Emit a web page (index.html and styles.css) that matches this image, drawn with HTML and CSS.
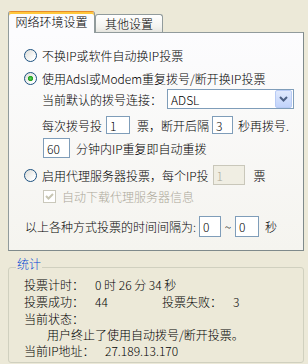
FILE: index.html
```html
<!DOCTYPE html>
<html lang="zh-CN">
<head>
    <meta charset="UTF-8">
    <title>投票设置</title>
    <link rel="stylesheet" href="styles.css">
</head>
<body>
<div class="window">
    <div class="tabs">
        <div class="tab active">网络环境设置</div>
        <div class="tab">其他设置</div>
    </div>

    <div class="panel">
        <div class="row">
            <span class="radio"></span>
            <span class="label">不换IP或软件自动换IP投票</span>
        </div>
        <div class="row row-radio2">
            <span class="radio checked"></span>
            <span class="label">使用Adsl或Modem重复拨号/断开换IP投票</span>
        </div>
        <div class="row row-select indent">
            <span>当前默认的拨号连接：</span>
            <div class="select">
                <span class="select-text">ADSL</span>
                <span class="select-btn">
                    <svg width="15" height="16" viewBox="0 0 15 16">
                        <path d="M4 6 L7.5 9.5 L11 6" fill="none" stroke="#4d6185" stroke-width="2"/>
                    </svg>
                </span>
            </div>
        </div>
        <div class="row row-votes indent">
            <span>每次拨号投</span>
            <span class="field field-votes">1</span>
            <span>票，断开后隔</span>
            <span class="field field-wait">3</span>
            <span class="after">秒再拨号.</span>
        </div>
        <div class="row row-minutes indent">
            <span class="field field-minutes">60</span>
            <span class="after-minutes">分钟内IP重复即自动重拨</span>
        </div>
        <div class="row row-proxy">
            <span class="radio"></span>
            <span class="label">启用代理服务器投票，每个IP投</span>
            <span class="field field-proxy disabled">1</span>
            <span class="after-proxy">票</span>
        </div>
        <div class="row row-check">
            <span class="checkbox">
                <svg width="11" height="11" viewBox="0 0 11 11">
                    <path d="M2 5 L4.5 7.5 L9 3" fill="none" stroke="#c7c5b2" stroke-width="2"/>
                </svg>
            </span>
            <span class="label-disabled">自动下载代理服务器信息</span>
        </div>
        <div class="row row-interval">
            <span class="interval-text">以上各种方式投票的时间间隔为:</span>
            <span class="field field-from">0</span>
            <span class="tilde">~</span>
            <span class="field field-to">0</span>
            <span class="after-to">秒</span>
        </div>
    </div>

    <fieldset class="stats">
        <legend>统计</legend>
        <div class="stats-body">
            <div class="stat-row">
                <span class="stat-label">投票计时：</span>
                <span>0 时 26 分 34 秒</span>
            </div>
            <div class="stat-row">
                <span class="stat-label">投票成功：</span>
                <span class="stat-value">44</span>
                <span class="stat-label">投票失败：</span>
                <span>3</span>
            </div>
            <div class="stat-row stat-row-short">
                <span>当前状态：</span>
            </div>
            <div class="stat-row stat-row-short">
                <span class="status">用户终止了使用自动拨号/断开投票。</span>
            </div>
            <div class="stat-row">
                <span class="stat-label-ip">当前IP地址：</span>
                <span>27.189.13.170</span>
            </div>
        </div>
    </fieldset>
</div>
</body>
</html>
```

FILE: styles.css
```css
body {
    margin: 0;
    background: #ece9d8;
    font-family: "Noto Sans CJK SC", "Liberation Sans", sans-serif;
    font-size: 12px;
    font-weight: 300;
    color: #000;
}

.window {
    width: 308px;
    height: 364px;
    padding: 11px 4px 0 8px;
    box-sizing: border-box;
}

/* tabs */
.tabs {
    display: flex;
    align-items: flex-end;
    height: 21px;
}

.tab {
    height: 17px;
    width: 66px;
    line-height: 17px;
    text-align: center;
    border: 1px solid #919b9c;
    border-bottom: none;
    border-radius: 3px 3px 0 0;
    background: linear-gradient(#ffffff, #f3f3ef 70%, #e6e5df);
}

.tab.active {
    position: relative;
    height: 21px;
    width: 85px;
    line-height: 20px;
    margin-bottom: -1px;
    border-top: 1px solid #e68b2c;
    box-shadow: inset 0 2px #ffc83c;
    background: #fcfcfe;
}

/* main panel */
.panel {
    border: 1px solid #919b9c;
    border-right-color: #7f8a8b;
    border-bottom-color: #7f8a8b;
    background: linear-gradient(#fcfcfe, #f5f4ef);
    padding: 13px 0 11px 15px;
    height: 193px;
}

.row {
    display: flex;
    align-items: center;
    height: 18px;
    white-space: nowrap;
}

.indent {
    padding-left: 18px;
}

.row-radio2 { margin-top: 5px; }
.row-select { height: 20px; margin-top: 2px; }
.row-votes { margin-top: 7px; }
.row-minutes { height: 20px; margin-top: 4px; }
.row-proxy { height: 20px; margin-top: 7px; }
.row-check { height: 16px; margin-top: 3px; }
.row-interval { height: 21px; margin-top: 12px; }

.radio {
    width: 11px;
    height: 11px;
    border: 1px solid #1c5180;
    border-radius: 50%;
    background: linear-gradient(135deg, #dcdcd7, #ffffff 80%);
    flex: none;
}

.radio.checked {
    background: radial-gradient(circle, #5ed45a 0, #21a121 2.2px, transparent 3px),
        linear-gradient(135deg, #dcdcd7, #ffffff 80%);
}

.label {
    margin-left: 5px;
}

.select {
    display: flex;
    align-items: center;
    justify-content: space-between;
    width: 125px;
    height: 18px;
    margin-left: 5px;
    border: 1px solid #7f9db9;
    background: #fff;
}

.select-text {
    padding-left: 3px;
}

.select-btn {
    display: flex;
    width: 15px;
    height: 16px;
    margin-right: 1px;
    border: 1px solid #b8cbf5;
    border-radius: 2px;
    background: linear-gradient(#e0e9fd, #c1d3fb);
}

.field {
    display: flex;
    align-items: center;
    box-sizing: border-box;
    height: 100%;
    padding-left: 3px;
    border: 1px solid #7f9db9;
    background: #fff;
}

.field.disabled {
    border-color: #c9c7ba;
    background: #f0eee3;
    color: #aca899;
}

.field-votes { width: 24px; margin: 0 7px 0 4px; }
.field-wait { width: 21px; margin-left: 3px; }
.field-minutes { width: 27px; margin-left: 1px; }
.field-proxy { width: 32px; margin-left: 4px; }
.field-from { width: 22px; margin-left: 3px; }
.field-to { width: 24px; }

.after { margin-left: 5px; }
.after-minutes { margin-left: 6px; }
.after-proxy { margin-left: 9px; }
.after-to { margin-left: 6px; }

.tilde {
    width: 14px;
    text-align: center;
}

.checkbox {
    display: flex;
    align-items: center;
    justify-content: center;
    width: 11px;
    height: 11px;
    margin-left: 19px;
    border: 1px solid #cac8bb;
    background: #fff;
}

.label-disabled {
    margin-left: 6px;
    color: #aca899;
}

.interval-text {
    margin-left: 1px;
}

/* statistics */
.stats {
    margin: 7px 0 0 0;
    padding: 0 0 3px 0;
    border: 1px solid #d0d0bf;
    border-radius: 3px;
    min-width: 0;
}

.stats legend {
    margin-left: 7px;
    padding: 0 1px 6px 1px;
    line-height: 12px;
    color: #0046d5;
}

.stats-body {
    padding-left: 15px;
}

.stat-row {
    display: flex;
    align-items: center;
    height: 17px;
    white-space: nowrap;
}

.stat-row-short {
    height: 16px;
}

.stat-label { width: 71px; }
.stat-value { width: 67px; }
.stat-label-ip { width: 81px; }

.status {
    margin-left: 23px;
}
```
